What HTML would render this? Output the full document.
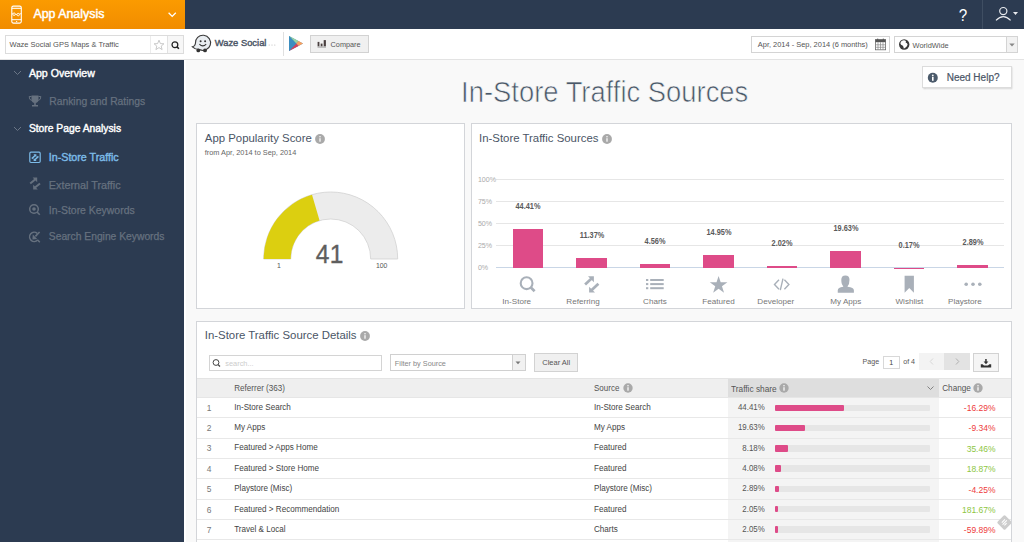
<!DOCTYPE html>
<html><head><meta charset="utf-8">
<style>
*{box-sizing:border-box;margin:0;padding:0}
html,body{width:1024px;height:542px;overflow:hidden;font-family:"Liberation Sans",sans-serif;background:#f9f9f9;position:relative}
.a{position:absolute}
.t{position:absolute;line-height:1;white-space:nowrap}
</style></head><body>
<div class="a" style="left:0px;top:0px;width:1024px;height:29px;background:#2c3b51"></div>
<div class="a" style="left:0px;top:0px;width:185px;height:29px;background:linear-gradient(#fb9b00,#f18c00)"></div>
<svg class="a" style="left:10px;top:4px;" width="14" height="22" viewBox="0 0 14 22"><rect x="1.8" y="2.1" width="9.5" height="17" rx="1.6" fill="none" stroke="#fff" stroke-width="1.1"/><line x1="1.8" y1="4.3" x2="11.3" y2="4.3" stroke="#fff" stroke-width="1.1"/><line x1="1.8" y1="15.7" x2="11.3" y2="15.7" stroke="#fff" stroke-width="1"/><polyline points="1.8,9.4 2.9,10.2 7,10.6 9.4,10.2 11.3,9.5" fill="none" stroke="#fff" stroke-width="0.9"/><circle cx="4.1" cy="10.2" r="1.25" fill="#f79500" stroke="#fff" stroke-width="0.9"/><circle cx="8.2" cy="10.6" r="1.25" fill="#f79500" stroke="#fff" stroke-width="0.9"/><circle cx="6.6" cy="17.6" r="0.7" fill="#fff"/></svg>
<div class="t" style="left:33.40px;top:8.20px;font-size:12.4px;color:#fff;font-weight:normal;-webkit-text-stroke:0.45px #fff">App Analysis</div>
<svg class="a" style="left:167px;top:11px;" width="11" height="7" viewBox="0 0 11 7"><polyline points="1.6,1.8 5.2,5.4 8.8,1.8" fill="none" stroke="#fff" stroke-width="1.3"/></svg>
<div class="t" style="left:962.90px;transform:translateX(-50%);top:7.12px;font-size:17.1px;color:#fff;font-weight:normal;transform:translateX(-50%) scaleX(0.89)">?</div>
<div class="a" style="left:982px;top:0px;width:1px;height:29px;background:#3f4e62"></div>
<svg class="a" style="left:993px;top:5px;" width="28" height="18" viewBox="0 0 28 18"><circle cx="10.3" cy="6.1" r="3.6" fill="none" stroke="#e8eaee" stroke-width="1.2"/><path d="M3 15.4 Q10.3 7.8 17.6 15.4" fill="none" stroke="#e8eaee" stroke-width="1.2"/><polygon points="20,7 25,7 22.5,10" fill="#e8eaee"/></svg>
<div class="a" style="left:0px;top:29px;width:1024px;height:30px;background:#fff"></div>
<div class="a" style="left:0px;top:59px;width:1024px;height:1px;background:#e3e3e3"></div>
<div class="a" style="left:5px;top:35px;width:179px;height:19px;background:#fff;border:1px solid #dcdcdc;box-sizing:border-box"></div>
<div class="a" style="left:150px;top:36px;width:1px;height:17px;background:#ececec"></div>
<div class="a" style="left:167px;top:36px;width:16px;height:17px;background:#f7f7f7;border-left:1px solid #e2e2e2;box-sizing:border-box"></div>
<div class="t" style="left:9.60px;top:40.65px;font-size:7.5px;color:#555;font-weight:normal;">Waze Social GPS Maps &amp; Traffic</div>
<svg class="a" style="left:152px;top:38px;" width="14" height="14" viewBox="0 0 14 14"><polygon points="7,2.2 8.4,5.6 11.9,5.8 9.2,8.1 10.1,11.6 7,9.6 3.9,11.6 4.8,8.1 2.1,5.8 5.6,5.6" fill="none" stroke="#bbb" stroke-width="0.8"/></svg>
<svg class="a" style="left:168px;top:38px;" width="15" height="14" viewBox="0 0 15 14"><circle cx="6.9" cy="6.8" r="2.9" fill="none" stroke="#222" stroke-width="1.25"/><line x1="9" y1="8.9" x2="10.9" y2="10.8" stroke="#222" stroke-width="1.6"/></svg>
<svg class="a" style="left:190px;top:34px;" width="24" height="20" viewBox="0 0 24 20"><path d="M5.4 9.5 A7.6 7.6 0 1 1 9.5 15.6 Q5 15.4 2.4 12.8 Q5 12.4 5.4 9.5 Z" fill="#e9edf1" stroke="#3a3a3a" stroke-width="1.1"/><circle cx="10.6" cy="7.3" r="1" fill="#333"/><circle cx="15.1" cy="7.3" r="1" fill="#333"/><path d="M9.4 10.2 Q12.8 13.6 16.2 10.2" fill="none" stroke="#333" stroke-width="1.1"/><circle cx="8.3" cy="16.4" r="1.9" fill="#333"/><circle cx="15" cy="16.4" r="1.9" fill="#333"/></svg>
<div class="t" style="left:214.70px;top:37.94px;font-size:9.4px;color:#4a5566;font-weight:normal;-webkit-text-stroke:0.4px #4a5566">Waze Social</div>
<svg class="a" style="left:268px;top:43px;" width="9" height="4" viewBox="0 0 9 4"><circle cx="1.2" cy="2" r="0.6" fill="#bbb"/><circle cx="4" cy="2" r="0.6" fill="#bbb"/><circle cx="6.8" cy="2" r="0.6" fill="#bbb"/></svg>
<div class="a" style="left:283px;top:32px;width:1px;height:24px;background:#e0e0e0"></div>
<svg class="a" style="left:288px;top:35px;" width="16" height="17" viewBox="0 0 16 17"><polygon points="1,1 15,8.5 1,16" fill="#3b8dbf"/><polygon points="1,1 8.2,8.5 10.5,6 " fill="#9ad3a0"/><polygon points="10.5,6 15,8.5 10.5,11 8.2,8.5" fill="#f9a05f"/><polygon points="1,16 8.2,8.5 10.5,11" fill="#d4405a"/><polygon points="1,1 8.2,8.5 1,16" fill="#3b8dbf"/></svg>
<div class="a" style="left:310px;top:35px;width:59px;height:18px;background:#f0f0f0;border:1px solid #d2d2d2;box-sizing:border-box"></div>
<svg class="a" style="left:317px;top:39px;" width="10" height="10" viewBox="0 0 10 10"><rect x="0.6" y="2.9" width="1.8" height="4.4" fill="#4a4040"/><rect x="3.7" y="4.6" width="1.8" height="2.7" fill="#4a4040"/><rect x="6.7" y="1.1" width="2.2" height="6.2" fill="#4a4040"/><rect x="0.5" y="7.7" width="8.5" height="0.7" fill="#777"/></svg>
<div class="t" style="left:330.60px;top:40.72px;font-size:7.3px;color:#555;font-weight:normal;">Compare</div>
<div class="a" style="left:751px;top:36px;width:139px;height:17px;background:#fff;border:1px solid #d4d4d4;box-sizing:border-box"></div>
<div class="t" style="left:757.80px;top:40.90px;font-size:7.44px;color:#555;font-weight:normal;">Apr, 2014 - Sep, 2014 (6 months)</div>
<svg class="a" style="left:874px;top:38px;" width="13" height="13" viewBox="0 0 13 13"><rect x="1.4" y="1.6" width="10.2" height="10.2" fill="#fff" stroke="#6a6a6a" stroke-width="0.8"/><rect x="1.4" y="1.6" width="10.2" height="2.6" fill="#555"/><rect x="3.2" y="0.6" width="1" height="2" fill="#555"/><rect x="8.8" y="0.6" width="1" height="2" fill="#555"/><g stroke="#888" stroke-width="0.7"><line x1="4" y1="4.2" x2="4" y2="11.8"/><line x1="6.5" y1="4.2" x2="6.5" y2="11.8"/><line x1="9" y1="4.2" x2="9" y2="11.8"/><line x1="1.4" y1="6.8" x2="11.6" y2="6.8"/><line x1="1.4" y1="9.3" x2="11.6" y2="9.3"/></g></svg>
<div class="a" style="left:894px;top:36px;width:124px;height:17px;background:#fff;border:1px solid #d4d4d4;box-sizing:border-box"></div>
<div class="a" style="left:1006px;top:37px;width:11px;height:15px;background:#f2f2f2;border-left:1px solid #d4d4d4;box-sizing:border-box"></div>
<svg class="a" style="left:1008px;top:42px;" width="8" height="6" viewBox="0 0 8 6"><polygon points="1.3,1.5 6.7,1.5 4,4.5" fill="#888"/></svg>
<svg class="a" style="left:898px;top:38px;" width="13" height="13" viewBox="0 0 13 13"><circle cx="6.2" cy="6.5" r="5.2" fill="#3a3a3a"/><path d="M3.6 2.9 Q5.6 1.9 7.2 2.6 Q8.6 3.6 7.6 4.6 Q9.4 5 9.6 6.4 Q9.2 8.4 7.6 9.6 Q6.6 10.6 5.8 10.4 Q5.6 8.6 4.6 7.6 Q2.6 7.2 2.4 5.6 Q2.6 3.8 3.6 2.9Z" fill="#fff"/></svg>
<div class="t" style="left:912.60px;top:41.54px;font-size:7.4px;color:#555;font-weight:normal;">WorldWide</div>
<div class="a" style="left:0px;top:60px;width:184px;height:482px;background:#2c3b51"></div>
<svg class="a" style="left:13px;top:70px;" width="9" height="6" viewBox="0 0 9 6"><polyline points="1,1 4.5,4.5 8,1" fill="none" stroke="#6b7686" stroke-width="1"/></svg>
<div class="t" style="left:28.90px;top:68.13px;font-size:10.6px;color:#fff;font-weight:normal;-webkit-text-stroke:0.4px #fff">App Overview</div>
<div class="t" style="left:49.20px;top:97.14px;font-size:10.35px;color:#66717f;font-weight:normal;-webkit-text-stroke:0.25px #66717f">Ranking and Ratings</div>
<svg class="a" style="left:28px;top:94px;" width="14" height="14" viewBox="0 0 14 14"><path d="M3.5 1.5 H10.5 V5.5 Q10.5 8.8 7 9 Q3.5 8.8 3.5 5.5Z" fill="#66717f"/><path d="M3.5 2.5 H1.2 Q1 6 3.8 6.5 M10.5 2.5 H12.8 Q13 6 10.2 6.5" fill="none" stroke="#66717f" stroke-width="1"/><rect x="6.2" y="8.5" width="1.6" height="2.5" fill="#66717f"/><rect x="4" y="11" width="6" height="1.5" fill="#66717f"/></svg>
<svg class="a" style="left:13px;top:126px;" width="9" height="6" viewBox="0 0 9 6"><polyline points="1,1 4.5,4.5 8,1" fill="none" stroke="#6b7686" stroke-width="1"/></svg>
<div class="t" style="left:28.90px;top:124.18px;font-size:10.3px;color:#fff;font-weight:normal;-webkit-text-stroke:0.4px #fff">Store Page Analysis</div>
<div class="t" style="left:48.80px;top:152.44px;font-size:10.7px;color:#7cbbe8;font-weight:normal;-webkit-text-stroke:0.4px #7cbbe8">In-Store Traffic</div>
<svg class="a" style="left:28px;top:150px;" width="14" height="15" viewBox="0 0 14 15"><rect x="1.8" y="2.2" width="10.4" height="10.3" rx="1.2" fill="none" stroke="#7cbbe8" stroke-width="1.2"/><polygon points="5.4,4.2 8.4,4.2 8.4,7.2" fill="#7cbbe8"/><line x1="3.8" y1="8.6" x2="7.4" y2="5.2" stroke="#7cbbe8" stroke-width="1.5"/><polygon points="5.6,11 8.6,11 5.6,8" fill="#7cbbe8"/><line x1="10.4" y1="6.4" x2="6.6" y2="10" stroke="#7cbbe8" stroke-width="1.5"/></svg>
<div class="t" style="left:48.80px;top:179.66px;font-size:10.8px;color:#66717f;font-weight:normal;-webkit-text-stroke:0.25px #66717f">External Traffic</div>
<svg class="a" style="left:28px;top:176px;" width="14" height="15" viewBox="0 0 14 15"><polygon points="4.6,1.6 9.2,1.6 9.2,6.2" fill="#66717f"/><line x1="2.2" y1="7.6" x2="7.4" y2="3.2" stroke="#66717f" stroke-width="2"/><polygon points="5.2,13.4 9.8,13.4 5.2,8.8" fill="#66717f"/><line x1="12" y1="7.4" x2="7" y2="11.6" stroke="#66717f" stroke-width="2"/></svg>
<div class="t" style="left:48.80px;top:206.35px;font-size:10.45px;color:#66717f;font-weight:normal;-webkit-text-stroke:0.25px #66717f">In-Store Keywords</div>
<svg class="a" style="left:28px;top:203px;" width="13" height="13" viewBox="0 0 13 13"><circle cx="6" cy="6" r="4.3" fill="none" stroke="#66717f" stroke-width="1.5"/><circle cx="6" cy="6" r="1.8" fill="#66717f"/><line x1="9" y1="9" x2="11.8" y2="11.8" stroke="#66717f" stroke-width="1.6"/></svg>
<div class="t" style="left:48.80px;top:232.48px;font-size:10.3px;color:#66717f;font-weight:normal;-webkit-text-stroke:0.25px #66717f">Search Engine Keywords</div>
<svg class="a" style="left:28px;top:229px;" width="14" height="15" viewBox="0 0 14 15"><path d="M9.2 4.4 A4.6 4.6 0 1 0 9.6 11" fill="none" stroke="#66717f" stroke-width="1.5"/><line x1="11.6" y1="3" x2="7.4" y2="7.4" stroke="#66717f" stroke-width="1.6"/><polygon points="4.4,10.4 4.8,5.6 9.2,10" fill="#66717f"/><line x1="9.4" y1="10.8" x2="11.8" y2="13.2" stroke="#66717f" stroke-width="1.5"/></svg>
<div class="a" style="left:184px;top:60px;width:2px;height:482px;background:#fff"></div>
<div class="a" style="left:186px;top:60px;width:838px;height:482px;background:#f9f9f9"></div>
<div class="t" style="left:604.70px;transform:translateX(-50%);top:78.61px;font-size:27.4px;color:#4a5868;font-weight:normal;-webkit-text-stroke:0.6px #f9f9f9;transform:translateX(-50%) scaleY(1.07);transform-origin:50% 85%">In-Store Traffic Sources</div>
<div class="a" style="left:922px;top:66px;width:90px;height:22px;background:#fff;border:1px solid #dcdcdc;box-sizing:border-box;box-shadow:0.5px 1px 1.5px rgba(0,0,0,0.16)"></div>
<svg class="a" style="left:927px;top:72px;" width="12" height="12" viewBox="0 0 12 12"><circle cx="5.8" cy="5.8" r="5" fill="#4b5a6b"/><rect x="5" y="4.8" width="1.6" height="4" fill="#fff"/><circle cx="5.8" cy="3.3" r="0.9" fill="#fff"/></svg>
<div class="t" style="left:946.70px;top:73.23px;font-size:10px;color:#4a5566;font-weight:normal;-webkit-text-stroke:0.2px #4a5566">Need Help?</div>
<div class="a" style="left:196px;top:123px;width:269px;height:186px;background:#fff;border:1px solid #d3d5d9;box-sizing:border-box"></div>
<div class="a" style="left:471px;top:123px;width:541px;height:186px;background:#fff;border:1px solid #d3d5d9;box-sizing:border-box"></div>
<div class="a" style="left:196px;top:321px;width:816px;height:230px;background:#fff;border:1px solid #d3d5d9;box-sizing:border-box"></div>
<div class="t" style="left:204.80px;top:132.55px;font-size:11.4px;color:#4a5566;font-weight:normal;">App Popularity Score</div>
<svg class="a" style="left:314.3px;top:133px;" width="12" height="12" viewBox="0 0 12 12"><circle cx="6" cy="6" r="4.9" fill="#a9a9a9"/><rect x="5.4" y="5.2" width="1.2" height="3.5" fill="#fff"/><circle cx="6" cy="3.7" r="0.75" fill="#fff"/></svg>
<div class="t" style="left:204.80px;top:149.48px;font-size:7.35px;color:#666;font-weight:normal;">from Apr, 2014 to Sep, 2014</div>
<svg class="a" style="left:0;top:0" width="1024" height="542"><path d="M263.70 259.00 A67 67 0 0 1 397.70 259.00 L370.70 259.00 A40 40 0 0 0 290.70 259.00 Z" fill="#ececec" stroke="#d2d2d2" stroke-width="0.8"/><path d="M263.70 259.00 A67 67 0 0 1 312.01 194.66 L319.54 220.59 A40 40 0 0 0 290.70 259.00 Z" fill="#dccf10"/></svg>
<div class="t" style="left:329.70px;transform:translateX(-50%);transform:translateX(-50%) scaleY(1.08);transform-origin:0 20.74px;top:242.66px;font-size:24.5px;color:#5e5e5e;font-weight:normal;letter-spacing:0.3px;-webkit-text-stroke:0.35px #5e5e5e">41</div>
<div class="t" style="left:279.00px;transform:translateX(-50%);top:263.26px;font-size:6.9px;color:#555;font-weight:normal;">1</div>
<div class="t" style="left:381.70px;transform:translateX(-50%);top:263.26px;font-size:6.9px;color:#555;font-weight:normal;">100</div>
<div class="t" style="left:479.00px;top:132.55px;font-size:11.4px;color:#4a5566;font-weight:normal;">In-Store Traffic Sources</div>
<svg class="a" style="left:600.5px;top:133px;" width="12" height="12" viewBox="0 0 12 12"><circle cx="6" cy="6" r="4.9" fill="#a9a9a9"/><rect x="5.4" y="5.2" width="1.2" height="3.5" fill="#fff"/><circle cx="6" cy="3.7" r="0.75" fill="#fff"/></svg>
<div class="a" style="left:496px;top:179px;width:508px;height:1px;background:#e6e6e6"></div>
<div class="t" style="left:477.90px;top:176.69px;font-size:7.1px;color:#aaa;font-weight:normal;">100%</div>
<div class="a" style="left:496px;top:201px;width:508px;height:1px;background:#e6e6e6"></div>
<div class="t" style="left:477.90px;top:198.69px;font-size:7.1px;color:#aaa;font-weight:normal;">75%</div>
<div class="a" style="left:496px;top:223px;width:508px;height:1px;background:#e6e6e6"></div>
<div class="t" style="left:477.90px;top:220.69px;font-size:7.1px;color:#aaa;font-weight:normal;">50%</div>
<div class="a" style="left:496px;top:245px;width:508px;height:1px;background:#e6e6e6"></div>
<div class="t" style="left:477.90px;top:242.69px;font-size:7.1px;color:#aaa;font-weight:normal;">25%</div>
<div class="a" style="left:496px;top:267px;width:508px;height:1px;background:#c9d6e6"></div>
<div class="t" style="left:477.90px;top:264.69px;font-size:7.1px;color:#aaa;font-weight:normal;">0%</div>
<div class="a" style="left:512.50px;top:228.92px;width:30.5px;height:39.08px;background:#de4b88"></div>
<div class="t" style="left:528.25px;transform:translateX(-50%);top:201.93px;font-size:9.2px;color:#5a5a5a;font-weight:bold;transform:translateX(-50%) scaleX(0.8)">44.41%</div>
<div class="t" style="left:516.70px;transform:translateX(-50%);top:297.54px;font-size:8.1px;color:#777;font-weight:normal;">In-Store</div>
<div class="a" style="left:576.00px;top:257.99px;width:30.5px;height:10.01px;background:#de4b88"></div>
<div class="t" style="left:591.75px;transform:translateX(-50%);top:231.01px;font-size:9.2px;color:#5a5a5a;font-weight:bold;transform:translateX(-50%) scaleX(0.8)">11.37%</div>
<div class="t" style="left:583.00px;transform:translateX(-50%);top:297.54px;font-size:8.1px;color:#777;font-weight:normal;">Referring</div>
<div class="a" style="left:639.50px;top:263.99px;width:30.5px;height:4.01px;background:#de4b88"></div>
<div class="t" style="left:655.25px;transform:translateX(-50%);top:237.00px;font-size:9.2px;color:#5a5a5a;font-weight:bold;transform:translateX(-50%) scaleX(0.8)">4.56%</div>
<div class="t" style="left:655.00px;transform:translateX(-50%);top:297.54px;font-size:8.1px;color:#777;font-weight:normal;">Charts</div>
<div class="a" style="left:703.00px;top:254.84px;width:30.5px;height:13.16px;background:#de4b88"></div>
<div class="t" style="left:718.75px;transform:translateX(-50%);top:227.86px;font-size:9.2px;color:#5a5a5a;font-weight:bold;transform:translateX(-50%) scaleX(0.8)">14.95%</div>
<div class="t" style="left:718.50px;transform:translateX(-50%);top:297.54px;font-size:8.1px;color:#777;font-weight:normal;">Featured</div>
<div class="a" style="left:766.50px;top:266.22px;width:30.5px;height:1.78px;background:#de4b88"></div>
<div class="t" style="left:782.25px;transform:translateX(-50%);top:239.23px;font-size:9.2px;color:#5a5a5a;font-weight:bold;transform:translateX(-50%) scaleX(0.8)">2.02%</div>
<div class="t" style="left:775.80px;transform:translateX(-50%);top:297.54px;font-size:8.1px;color:#777;font-weight:normal;">Developer</div>
<div class="a" style="left:830.00px;top:250.73px;width:30.5px;height:17.27px;background:#de4b88"></div>
<div class="t" style="left:845.75px;transform:translateX(-50%);top:223.74px;font-size:9.2px;color:#5a5a5a;font-weight:bold;transform:translateX(-50%) scaleX(0.8)">19.63%</div>
<div class="t" style="left:845.90px;transform:translateX(-50%);top:297.54px;font-size:8.1px;color:#777;font-weight:normal;">My Apps</div>
<div class="a" style="left:893.50px;top:267.85px;width:30.5px;height:0.15px;background:#de4b88"></div>
<div class="t" style="left:909.25px;transform:translateX(-50%);top:240.86px;font-size:9.2px;color:#5a5a5a;font-weight:bold;transform:translateX(-50%) scaleX(0.8)">0.17%</div>
<div class="t" style="left:909.40px;transform:translateX(-50%);top:297.54px;font-size:8.1px;color:#777;font-weight:normal;">Wishlist</div>
<div class="a" style="left:957.00px;top:265.46px;width:30.5px;height:2.54px;background:#de4b88"></div>
<div class="t" style="left:972.75px;transform:translateX(-50%);top:238.47px;font-size:9.2px;color:#5a5a5a;font-weight:bold;transform:translateX(-50%) scaleX(0.8)">2.89%</div>
<div class="t" style="left:964.90px;transform:translateX(-50%);top:297.54px;font-size:8.1px;color:#777;font-weight:normal;">Playstore</div>
<svg class="a" style="left:519px;top:276px;overflow:visible" width="20" height="20" viewBox="0 0 20 20"><circle cx="7.6" cy="7.2" r="5.9" fill="none" stroke="#a9b0b9" stroke-width="2.1"/><line x1="11.6" y1="11.3" x2="15.6" y2="15.2" stroke="#a9b0b9" stroke-width="2.7"/></svg>
<svg class="a" style="left:583px;top:276px;overflow:visible" width="20" height="20" viewBox="0 0 20 20"><polygon points="5,0.3 10.9,0.3 10.9,6.2" fill="#a9b0b9"/><line x1="2.1" y1="8.4" x2="8.8" y2="2.2" stroke="#a9b0b9" stroke-width="2.7"/><polygon points="6.1,16.6 12,16.6 6.1,10.7" fill="#a9b0b9"/><line x1="15.4" y1="7.8" x2="8.2" y2="14.6" stroke="#a9b0b9" stroke-width="2.7"/></svg>
<svg class="a" style="left:646px;top:276px;overflow:visible" width="20" height="20" viewBox="0 0 20 20"><g fill="#a9b0b9"><rect x="0" y="3" width="2.3" height="2"/><rect x="4.2" y="3" width="13.5" height="2"/><rect x="0" y="7.1" width="2.3" height="2"/><rect x="4.2" y="7.1" width="13.5" height="2"/><rect x="0" y="11.2" width="2.3" height="2"/><rect x="4.2" y="11.2" width="13.5" height="2"/></g></svg>
<svg class="a" style="left:710px;top:276px;overflow:visible" width="20" height="20" viewBox="0 0 20 20"><polygon points="8.60,-0.10 10.68,6.29 17.40,6.29 11.96,10.24 14.04,16.63 8.60,12.68 3.16,16.63 5.24,10.24 -0.20,6.29 6.52,6.29" fill="#a9b0b9"/></svg>
<svg class="a" style="left:773px;top:276px;overflow:visible" width="20" height="20" viewBox="0 0 20 20"><path d="M6 3.8 L1.5 8.5 L6 13.2 M11.4 3.8 L15.9 8.5 L11.4 13.2 M10 2.6 L7.3 14.2" fill="none" stroke="#a9b0b9" stroke-width="1.4"/></svg>
<svg class="a" style="left:837px;top:275px;overflow:visible" width="20" height="20" viewBox="0 0 20 20"><path d="M4.3 4.8 Q4.3 0.4 8.4 0.4 Q12.5 0.4 12.5 4.8 Q12.5 9.4 10.6 11.2 L10.6 11.8 Q16.9 12.6 16.9 15.2 L16.9 17.7 L0.75 17.7 L0.75 15.2 Q0.75 12.6 6.2 11.8 L6.2 11.2 Q4.3 9.4 4.3 4.8 Z" fill="#a9b0b9"/></svg>
<svg class="a" style="left:900px;top:276px;overflow:visible" width="20" height="20" viewBox="0 0 20 20"><path d="M4.6 -0.3 H13.9 V16.7 L9.25 12 L4.6 16.7 Z" fill="#a9b0b9"/></svg>
<svg class="a" style="left:964px;top:276px;overflow:visible" width="20" height="20" viewBox="0 0 20 20"><circle cx="2.2" cy="8.2" r="1.8" fill="#a9b0b9"/><circle cx="9" cy="8.2" r="1.8" fill="#a9b0b9"/><circle cx="15.8" cy="8.2" r="1.8" fill="#a9b0b9"/></svg>
<div class="t" style="left:204.80px;top:330.35px;font-size:11.4px;color:#4a5566;font-weight:normal;">In-Store Traffic Source Details</div>
<svg class="a" style="left:358.9px;top:330.4px;" width="12" height="12" viewBox="0 0 12 12"><circle cx="6" cy="6" r="4.9" fill="#a9a9a9"/><rect x="5.4" y="5.2" width="1.2" height="3.5" fill="#fff"/><circle cx="6" cy="3.7" r="0.75" fill="#fff"/></svg>
<div class="a" style="left:209px;top:355px;width:173px;height:16px;background:#fff;border:1px solid #d4d4d4;box-sizing:border-box"></div>
<svg class="a" style="left:211px;top:357px;" width="11" height="12" viewBox="0 0 11 12"><circle cx="5" cy="5.5" r="2.9" fill="none" stroke="#444" stroke-width="1"/><line x1="7.1" y1="7.6" x2="9" y2="9.5" stroke="#444" stroke-width="1.3"/></svg>
<div class="t" style="left:225.30px;top:359.54px;font-size:7.4px;color:#ccc;font-weight:normal;">search...</div>
<div class="a" style="left:390px;top:354px;width:136px;height:17px;background:#fff;border:1px solid #d0d0d0;box-sizing:border-box"></div>
<div class="a" style="left:512px;top:355px;width:13px;height:15px;background:#f1f1f1;border-left:1px solid #d0d0d0;box-sizing:border-box"></div>
<svg class="a" style="left:514px;top:360px;" width="9" height="6" viewBox="0 0 9 6"><polygon points="1.5,1.5 6.5,1.5 4,4.2" fill="#777"/></svg>
<div class="t" style="left:394.80px;top:359.82px;font-size:7.3px;color:#888;font-weight:normal;">Filter by Source</div>
<div class="a" style="left:534px;top:353px;width:44px;height:19px;background:#f0f0f0;border:1px solid #d2d2d2;box-sizing:border-box"></div>
<div class="t" style="left:556.20px;transform:translateX(-50%);top:359.15px;font-size:7.5px;color:#555;font-weight:normal;">Clear All</div>
<div class="t" style="left:862.60px;transform:scaleY(1.12);transform-origin:0 6.01px;top:359.29px;font-size:7.1px;color:#555;font-weight:normal;">Page</div>
<div class="a" style="left:883px;top:356px;width:17px;height:13px;background:#fff;border:1px solid #d8d8d8;box-sizing:border-box"></div>
<div class="t" style="left:891.30px;transform:translateX(-50%);transform:translateX(-50%) scaleY(1.12);transform-origin:0 6.01px;top:359.89px;font-size:7.1px;color:#444;font-weight:normal;">1</div>
<div class="t" style="left:903.20px;transform:scaleY(1.12);transform-origin:0 6.01px;top:359.29px;font-size:7.1px;color:#555;font-weight:normal;">of 4</div>
<div class="a" style="left:919px;top:353px;width:25px;height:17px;background:#f3f3f3"></div>
<div class="a" style="left:944px;top:353px;width:26px;height:17px;background:#e3e3e3"></div>
<svg class="a" style="left:926px;top:356px;" width="12" height="11" viewBox="0 0 12 11"><polyline points="7,2.5 4.2,5.5 7,8.5" fill="none" stroke="#d5d5d5" stroke-width="0.9"/></svg>
<svg class="a" style="left:951px;top:356px;" width="12" height="11" viewBox="0 0 12 11"><polyline points="5,2.5 7.8,5.5 5,8.5" fill="none" stroke="#aaa" stroke-width="0.9"/></svg>
<div class="a" style="left:973px;top:353px;width:26px;height:19px;background:#f5f5f5;border:1px solid #d2d2d2;box-sizing:border-box"></div>
<svg class="a" style="left:979px;top:356px;" width="14" height="13" viewBox="0 0 14 13"><rect x="6.2" y="3" width="1.5" height="3" fill="#333"/><polygon points="4.6,5.6 9.4,5.6 6.95,8.2" fill="#333"/><path d="M1.8 8.2 L3.6 8.2 L5 9.4 L9 9.4 L10.4 8.2 L12.2 8.2 L12.2 11.6 L1.8 11.6 Z" fill="#333"/></svg>
<div class="a" style="left:197px;top:378px;width:814px;height:20px;background:#efefef"></div>
<div class="a" style="left:728px;top:378px;width:211px;height:20px;background:#dedede"></div>
<div class="a" style="left:197px;top:378px;width:814px;height:1px;background:#e4e4e4"></div>
<div class="a" style="left:197px;top:397px;width:814px;height:1px;background:#e6e6e6"></div>
<div class="t" style="left:234.20px;transform:scaleY(1.12);transform-origin:0 6.86px;top:384.84px;font-size:8.1px;color:#555;font-weight:normal;">Referrer (363)</div>
<div class="t" style="left:594.00px;transform:scaleY(1.12);transform-origin:0 6.77px;top:384.93px;font-size:8px;color:#555;font-weight:normal;">Source</div>
<svg class="a" style="left:621.7px;top:381.8px;" width="12" height="12" viewBox="0 0 12 12"><circle cx="6" cy="6" r="4.7" fill="#a9a9a9"/><rect x="5.4" y="5.2" width="1.2" height="3.5" fill="#fff"/><circle cx="6" cy="3.7" r="0.75" fill="#fff"/></svg>
<div class="t" style="left:731.00px;transform:scaleY(1.12);transform-origin:0 7.03px;top:384.67px;font-size:8.3px;color:#555;font-weight:normal;">Traffic share</div>
<svg class="a" style="left:777.7px;top:381.8px;" width="12" height="12" viewBox="0 0 12 12"><circle cx="6" cy="6" r="4.7" fill="#a9a9a9"/><rect x="5.4" y="5.2" width="1.2" height="3.5" fill="#fff"/><circle cx="6" cy="3.7" r="0.75" fill="#fff"/></svg>
<svg class="a" style="left:926px;top:385px;" width="9" height="7" viewBox="0 0 9 7"><polyline points="1.5,1.5 4.5,4.5 7.5,1.5" fill="none" stroke="#777" stroke-width="0.9"/></svg>
<div class="t" style="left:942.20px;transform:scaleY(1.12);transform-origin:0 6.94px;top:384.76px;font-size:8.2px;color:#555;font-weight:normal;">Change</div>
<svg class="a" style="left:972.4px;top:381.8px;" width="12" height="12" viewBox="0 0 12 12"><circle cx="6" cy="6" r="4.7" fill="#a9a9a9"/><rect x="5.4" y="5.2" width="1.2" height="3.5" fill="#fff"/><circle cx="6" cy="3.7" r="0.75" fill="#fff"/></svg>
<div class="a" style="left:728px;top:398px;width:211px;height:160px;background:#f4f4f4"></div>
<div class="a" style="left:197px;top:417px;width:814px;height:1px;background:#e8e8e8"></div>
<div class="t" style="left:206.70px;transform:scaleY(1.12);transform-origin:0 7.11px;top:403.69px;font-size:8.4px;color:#777;font-weight:normal;">1</div>
<div class="t" style="left:234.20px;transform:scaleY(1.15);transform-origin:0 6.86px;top:403.54px;font-size:8.1px;color:#444;font-weight:normal;">In-Store Search</div>
<div class="t" style="left:594.00px;transform:scaleY(1.15);transform-origin:0 6.86px;top:403.54px;font-size:8.1px;color:#444;font-weight:normal;">In-Store Search</div>
<div class="t" style="right:259.30px;transform:scaleY(1.15);transform-origin:0 6.69px;top:403.71px;font-size:7.9px;color:#555;font-weight:normal;">44.41%</div>
<div class="a" style="left:775px;top:404.70px;width:154.5px;height:6.5px;background:#e6e6e6;border-radius:1px"></div>
<div class="a" style="left:775px;top:404.70px;width:68.61px;height:6.5px;background:#de4b88;border-radius:1px"></div>
<div class="t" style="right:28.50px;transform:scaleY(1.1);transform-origin:0 7.20px;top:404.00px;font-size:8.5px;color:#ee3b3b;font-weight:normal;">-16.29%</div>
<div class="a" style="left:197px;top:438px;width:814px;height:1px;background:#e8e8e8"></div>
<div class="t" style="left:206.70px;transform:scaleY(1.12);transform-origin:0 7.11px;top:424.09px;font-size:8.4px;color:#777;font-weight:normal;">2</div>
<div class="t" style="left:234.20px;transform:scaleY(1.15);transform-origin:0 6.86px;top:423.94px;font-size:8.1px;color:#444;font-weight:normal;">My Apps</div>
<div class="t" style="left:594.00px;transform:scaleY(1.15);transform-origin:0 6.86px;top:423.94px;font-size:8.1px;color:#444;font-weight:normal;">My Apps</div>
<div class="t" style="right:259.30px;transform:scaleY(1.15);transform-origin:0 6.69px;top:424.11px;font-size:7.9px;color:#555;font-weight:normal;">19.63%</div>
<div class="a" style="left:775px;top:424.95px;width:154.5px;height:6.5px;background:#e6e6e6;border-radius:1px"></div>
<div class="a" style="left:775px;top:424.95px;width:30.33px;height:6.5px;background:#de4b88;border-radius:1px"></div>
<div class="t" style="right:28.50px;transform:scaleY(1.1);transform-origin:0 7.20px;top:424.40px;font-size:8.5px;color:#ee3b3b;font-weight:normal;">-9.34%</div>
<div class="a" style="left:197px;top:458px;width:814px;height:1px;background:#e8e8e8"></div>
<div class="t" style="left:206.70px;transform:scaleY(1.12);transform-origin:0 7.11px;top:444.49px;font-size:8.4px;color:#777;font-weight:normal;">3</div>
<div class="t" style="left:234.20px;transform:scaleY(1.15);transform-origin:0 6.86px;top:444.34px;font-size:8.1px;color:#444;font-weight:normal;">Featured &gt; Apps Home</div>
<div class="t" style="left:594.00px;transform:scaleY(1.15);transform-origin:0 6.86px;top:444.34px;font-size:8.1px;color:#444;font-weight:normal;">Featured</div>
<div class="t" style="right:259.30px;transform:scaleY(1.15);transform-origin:0 6.69px;top:444.51px;font-size:7.9px;color:#555;font-weight:normal;">8.18%</div>
<div class="a" style="left:775px;top:445.20px;width:154.5px;height:6.5px;background:#e6e6e6;border-radius:1px"></div>
<div class="a" style="left:775px;top:445.20px;width:12.64px;height:6.5px;background:#de4b88;border-radius:1px"></div>
<div class="t" style="right:28.50px;transform:scaleY(1.1);transform-origin:0 7.20px;top:444.80px;font-size:8.5px;color:#8dc63f;font-weight:normal;">35.46%</div>
<div class="a" style="left:197px;top:478px;width:814px;height:1px;background:#e8e8e8"></div>
<div class="t" style="left:206.70px;transform:scaleY(1.12);transform-origin:0 7.11px;top:464.89px;font-size:8.4px;color:#777;font-weight:normal;">4</div>
<div class="t" style="left:234.20px;transform:scaleY(1.15);transform-origin:0 6.86px;top:464.74px;font-size:8.1px;color:#444;font-weight:normal;">Featured &gt; Store Home</div>
<div class="t" style="left:594.00px;transform:scaleY(1.15);transform-origin:0 6.86px;top:464.74px;font-size:8.1px;color:#444;font-weight:normal;">Featured</div>
<div class="t" style="right:259.30px;transform:scaleY(1.15);transform-origin:0 6.69px;top:464.91px;font-size:7.9px;color:#555;font-weight:normal;">4.08%</div>
<div class="a" style="left:775px;top:465.45px;width:154.5px;height:6.5px;background:#e6e6e6;border-radius:1px"></div>
<div class="a" style="left:775px;top:465.45px;width:6.30px;height:6.5px;background:#de4b88;border-radius:1px"></div>
<div class="t" style="right:28.50px;transform:scaleY(1.1);transform-origin:0 7.20px;top:465.20px;font-size:8.5px;color:#8dc63f;font-weight:normal;">18.87%</div>
<div class="a" style="left:197px;top:499px;width:814px;height:1px;background:#e8e8e8"></div>
<div class="t" style="left:206.70px;transform:scaleY(1.12);transform-origin:0 7.11px;top:485.29px;font-size:8.4px;color:#777;font-weight:normal;">5</div>
<div class="t" style="left:234.20px;transform:scaleY(1.15);transform-origin:0 6.86px;top:485.14px;font-size:8.1px;color:#444;font-weight:normal;">Playstore (Misc)</div>
<div class="t" style="left:594.00px;transform:scaleY(1.15);transform-origin:0 6.86px;top:485.14px;font-size:8.1px;color:#444;font-weight:normal;">Playstore (Misc)</div>
<div class="t" style="right:259.30px;transform:scaleY(1.15);transform-origin:0 6.69px;top:485.31px;font-size:7.9px;color:#555;font-weight:normal;">2.89%</div>
<div class="a" style="left:775px;top:485.70px;width:154.5px;height:6.5px;background:#e6e6e6;border-radius:1px"></div>
<div class="a" style="left:775px;top:485.70px;width:4.47px;height:6.5px;background:#de4b88;border-radius:1px"></div>
<div class="t" style="right:28.50px;transform:scaleY(1.1);transform-origin:0 7.20px;top:485.60px;font-size:8.5px;color:#ee3b3b;font-weight:normal;">-4.25%</div>
<div class="a" style="left:197px;top:519px;width:814px;height:1px;background:#e8e8e8"></div>
<div class="t" style="left:206.70px;transform:scaleY(1.12);transform-origin:0 7.11px;top:505.69px;font-size:8.4px;color:#777;font-weight:normal;">6</div>
<div class="t" style="left:234.20px;transform:scaleY(1.15);transform-origin:0 6.86px;top:505.54px;font-size:8.1px;color:#444;font-weight:normal;">Featured &gt; Recommendation</div>
<div class="t" style="left:594.00px;transform:scaleY(1.15);transform-origin:0 6.86px;top:505.54px;font-size:8.1px;color:#444;font-weight:normal;">Featured</div>
<div class="t" style="right:259.30px;transform:scaleY(1.15);transform-origin:0 6.69px;top:505.71px;font-size:7.9px;color:#555;font-weight:normal;">2.05%</div>
<div class="a" style="left:775px;top:505.95px;width:154.5px;height:6.5px;background:#e6e6e6;border-radius:1px"></div>
<div class="a" style="left:775px;top:505.95px;width:3.17px;height:6.5px;background:#de4b88;border-radius:1px"></div>
<div class="t" style="right:28.50px;transform:scaleY(1.1);transform-origin:0 7.20px;top:506.00px;font-size:8.5px;color:#8dc63f;font-weight:normal;">181.67%</div>
<div class="a" style="left:197px;top:539px;width:814px;height:1px;background:#e8e8e8"></div>
<div class="t" style="left:206.70px;transform:scaleY(1.12);transform-origin:0 7.11px;top:526.09px;font-size:8.4px;color:#777;font-weight:normal;">7</div>
<div class="t" style="left:234.20px;transform:scaleY(1.15);transform-origin:0 6.86px;top:525.94px;font-size:8.1px;color:#444;font-weight:normal;">Travel &amp; Local</div>
<div class="t" style="left:594.00px;transform:scaleY(1.15);transform-origin:0 6.86px;top:525.94px;font-size:8.1px;color:#444;font-weight:normal;">Charts</div>
<div class="t" style="right:259.30px;transform:scaleY(1.15);transform-origin:0 6.69px;top:526.11px;font-size:7.9px;color:#555;font-weight:normal;">2.05%</div>
<div class="a" style="left:775px;top:526.20px;width:154.5px;height:6.5px;background:#e6e6e6;border-radius:1px"></div>
<div class="a" style="left:775px;top:526.20px;width:3.17px;height:6.5px;background:#de4b88;border-radius:1px"></div>
<div class="t" style="right:28.50px;transform:scaleY(1.1);transform-origin:0 7.20px;top:526.40px;font-size:8.5px;color:#ee3b3b;font-weight:normal;">-59.89%</div>
<div class="a" style="left:197px;top:559px;width:814px;height:1px;background:#e8e8e8"></div>
<svg class="a" style="left:995px;top:513px;" width="19" height="19" viewBox="0 0 19 19"><rect x="4" y="4" width="11" height="11" rx="1.5" transform="rotate(45 9.5 9.5)" fill="#cdcdcd"/><path d="M6.8 9.6 L10 6.4 M7.6 11.6 L11.8 7.4 M9.4 12.4 L11.6 10.2" stroke="#fff" stroke-width="1.1"/></svg>
<div class="a" style="left:1011px;top:321px;width:1px;height:221px;background:#d3d5d9"></div>
</body></html>
